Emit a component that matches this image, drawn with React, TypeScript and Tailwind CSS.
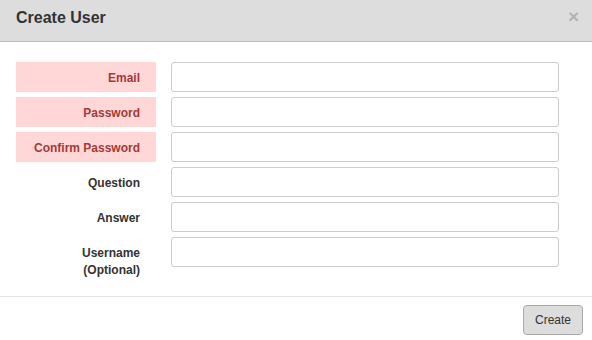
import React from "react";

interface Field {
  label: string;
  sub?: string;
  error?: boolean;
  type?: string;
}

const fields: Field[] = [
  { label: "Email", error: true, type: "email" },
  { label: "Password", error: true, type: "password" },
  { label: "Confirm Password", error: true, type: "password" },
  { label: "Question" },
  { label: "Answer" },
  { label: "Username", sub: "(Optional)" },
];

export default function App() {
  return (
    <div className="w-[592px] h-[340px] overflow-hidden bg-white font-['Liberation_Sans',Arial,sans-serif] text-[#333]">
      {/* Header */}
      <div className="h-[42px] bg-[#dddddd] border-b border-[#bdbdbd] flex items-center justify-between pl-4 pr-[13px]">
        <h3 className="text-[16px] font-bold leading-none text-[#333] -mt-[5px]">Create User</h3>
        <button className="text-[19px] font-bold leading-none text-[#b4b4b4] -mt-[9px]">×</button>
      </div>

      {/* Body */}
      <div className="pt-5 pb-3 pl-4 flex flex-col gap-[5px]">
        {fields.map((f) => (
          <div key={f.label} className="flex items-start gap-[15px]">
            <label
              className={`w-[140px] shrink-0 text-right pr-4 pt-[8px] pb-[5px] text-[12px] font-bold leading-[17px] ${
                f.error ? "bg-[#ffd7d7] text-[#a33a3a]" : "text-[#333]"
              }`}
            >
              {f.label}
              {f.sub && (
                <>
                  <br />
                  {f.sub}
                </>
              )}
            </label>
            <input
              type={f.type ?? "text"}
              className="w-[388px] h-[30px] border border-[#cccccc] rounded-[3px] bg-white px-2 text-[12px] outline-none"
            />
          </div>
        ))}
      </div>

      {/* Footer */}
      <div className="border-t border-[#e5e5e5] flex justify-end pt-2 pr-[9px]">
        <button className="w-[60px] h-[30px] bg-[#dddddd] border border-[#a9a9a9] rounded-[4px] text-[12px] text-[#333]">
          Create
        </button>
      </div>
    </div>
  );
}
